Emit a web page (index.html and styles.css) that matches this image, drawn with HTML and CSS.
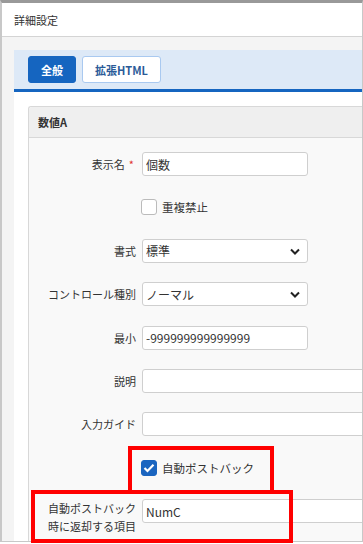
FILE: index.html
```html
<html lang="ja">
<head>
  <meta charset="UTF-8">
  <meta name="viewport" content="width=device-width, initial-scale=1.0">
  <link rel="stylesheet" href="styles.css">
  <title>詳細設定</title>
</head>
<body>
<div class="dialog">
  <div class="dlg-head">詳細設定</div>
  <div class="dlg-body">
    <div class="tabs">
      <button class="tab active">全般</button>
      <button class="tab">拡張HTML</button>
    </div>
    <div class="tab-panel">
      <div class="card">
        <div class="card-head">数値A</div>
        <div class="card-body form">
          <label class="lbl">表示名<span class="req">*</span></label>
          <div class="field"><input class="inp narrow" type="text" value="個数"></div>

          <div class="lbl"></div>
          <div class="field">
            <label class="check"><span class="box"></span>重複禁止</label>
          </div>

          <label class="lbl">書式</label>
          <div class="field">
            <div class="sel narrow">
              <select><option>標準</option></select>
              <svg class="chev" width="10" height="7" viewBox="0 0 10 7"><path d="M1 1.5 L5 5.5 L9 1.5" fill="none" stroke="#222" stroke-width="2"/></svg>
            </div>
          </div>

          <label class="lbl">コントロール種別</label>
          <div class="field">
            <div class="sel narrow">
              <select><option>ノーマル</option></select>
              <svg class="chev" width="10" height="7" viewBox="0 0 10 7"><path d="M1 1.5 L5 5.5 L9 1.5" fill="none" stroke="#222" stroke-width="2"/></svg>
            </div>
          </div>

          <label class="lbl">最小</label>
          <div class="field"><input class="inp narrow" type="text" value="-999999999999999"></div>

          <label class="lbl">説明</label>
          <div class="field"><input class="inp wide" type="text"></div>

          <label class="lbl">入力ガイド</label>
          <div class="field"><input class="inp wide" type="text"></div>

          <div class="lbl"></div>
          <div class="field">
            <label class="check"><span class="box on"><svg width="12" height="10" viewBox="0 0 12 10"><path d="M1.5 5 L4.5 8 L10.5 1.8" fill="none" stroke="#fff" stroke-width="2.2"/></svg></span>自動ポストバック</label>
          </div>

          <label class="lbl two">自動ポストバック<br>時に返却する項目</label>
          <div class="field top"><input class="inp wide" type="text" value="NumC"></div>
        </div>
      </div>
    </div>
  </div>
</div>
<div class="mark mark-1"></div>
<div class="mark mark-2"></div>
</body>
</html>
```

FILE: styles.css
```css
body {
  margin: 0;
  padding: 0;
  font-family: "Noto Sans CJK JP", "Noto Sans", sans-serif;
  font-size: 11px;
  color: #333;
  background: #fff;
  overflow: hidden;
  position: relative;
  height: 544px;
}

.dialog {
  box-sizing: border-box;
  width: 363px;
  height: 542px;
  border-top: 3px solid #999;
  border-left: 2px solid #c8c8c8;
  border-right: 1px solid #c8c8c8;
  border-bottom: 1px solid #c8c8c8;
  display: flex;
  flex-direction: column;
  overflow: hidden;
}

.dlg-head {
  height: 33px;
  line-height: 34px;
  padding-left: 12px;
  background: #fff;
  border-bottom: 1px solid #d4d4d4;
  flex-shrink: 0;
}

.dlg-body {
  flex: 1;
  background: #f4f4f4;
  padding: 13px 0 0 12px;
  display: flex;
  flex-direction: column;
  min-height: 0;
}

.tabs {
  box-sizing: border-box;
  padding: 6px 14px;
  background: #dde9f7;
  border-bottom: 3px solid #1565c0;
  display: flex;
  gap: 6px;
  height: 42px;
  flex-shrink: 0;
}

.tab {
  height: 27px;
  padding: 0;
  font-family: inherit;
  font-size: 11px;
  font-weight: bold;
  border-radius: 3px;
  border: 1px solid #a9c9f0;
  background: #fff;
  color: #2b5b98;
  width: 79px;
}

.tab.active {
  width: 48px;
  background: #1565c0;
  border-color: #1565c0;
  color: #fff;
}

.tab-panel {
  flex: 1;
  background: #fff;
  padding: 14px 0 0 14px;
  min-height: 0;
}

.card {
  border: 1px solid #d8d8d8;
  border-right: none;
  border-bottom: none;
  border-radius: 3px 0 0 0;
  background: #f9f9f9;
  height: 100%;
  box-sizing: border-box;
}

.card-head {
  height: 30px;
  line-height: 30px;
  padding-left: 9px;
  font-weight: bold;
  background: #efefef;
  border-bottom: 1px solid #d8d8d8;
  border-radius: 3px 0 0 0;
}

.form {
  display: grid;
  grid-template-columns: 107px 1fr;
  column-gap: 6px;
  row-gap: 19.4px;
  padding-top: 14px;
}

.lbl {
  text-align: right;
  line-height: 24px;
  white-space: nowrap;
}

.lbl.two {
  line-height: 18px;
}

.req {
  color: #e03030;
  margin-left: 4px;
  margin-right: 2px;
}

.field {
  height: 24px;
  display: flex;
  align-items: center;
}

.field.top {
  align-items: flex-start;
}

.inp {
  box-sizing: border-box;
  height: 24px;
  border: 1px solid #cfcfcf;
  border-radius: 3px;
  background: #fff;
  font-family: inherit;
  font-size: 12px;
  color: #333;
  padding: 0 0 0 3px;
  outline: none;
}

.narrow {
  width: 166px;
}

.wide {
  width: 260px;
}

.sel {
  position: relative;
  height: 24px;
}

.sel select {
  box-sizing: border-box;
  width: 100%;
  height: 24px;
  appearance: none;
  -webkit-appearance: none;
  border: 1px solid #cfcfcf;
  border-radius: 3px;
  background: #fff;
  font-family: inherit;
  font-size: 12px;
  color: #333;
  padding: 0 0 0 3px;
}

.sel .chev {
  position: absolute;
  right: 8px;
  top: 9px;
}

.check {
  display: flex;
  align-items: center;
  gap: 5px;
  margin-left: -1px;
  font-size: 11.5px;
}

.box {
  box-sizing: border-box;
  width: 16px;
  height: 16px;
  border: 1px solid #bbb;
  border-radius: 3px;
  background: #fff;
  display: flex;
  align-items: center;
  justify-content: center;
}

.box.on {
  background: #1a65c0;
  border-color: #1a65c0;
}

.mark {
  position: absolute;
  box-sizing: border-box;
  border: 4px solid #f00;
}

.mark-1 {
  left: 128px;
  top: 446px;
  width: 146px;
  height: 48px;
}

.mark-2 {
  left: 31px;
  top: 490px;
  width: 262px;
  height: 53px;
}
```
